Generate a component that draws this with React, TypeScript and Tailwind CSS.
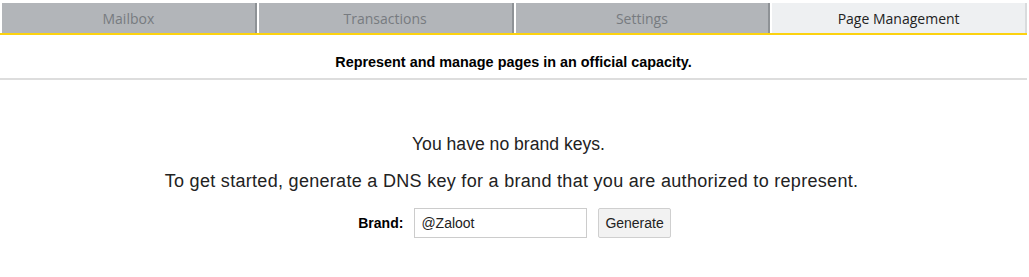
const tabs = ["Mailbox", "Transactions", "Settings", "Page Management"];

export default function App() {
  const active = 3;
  return (
    <div className="min-h-screen bg-white" style={{ fontFamily: '"Liberation Sans", Arial, sans-serif' }}>
      {/* Tab bar */}
      <div className="w-[1027px] pt-[3px] pl-[2px] border-b-2 border-[#fcd20f] flex gap-[2px]">
        {tabs.map((t, i) => (
          <div
            key={t}
            className={
              "flex-1 h-[30px] flex items-center justify-center text-[14px] border-r-2 " +
              (i === active
                ? "bg-[#eef0f2] text-[#222] border-[#d9dbdd]"
                : "bg-[#b2b5b9] text-[#777b80] border-[#8e9296]")
            }
            style={{ fontFamily: '"Open Sans", sans-serif' }}
          >
            {t}
          </div>
        ))}
      </div>

      {/* Subtitle */}
      <div className="w-[1027px] h-[45px] border-b-2 border-[#dddddd] flex items-center justify-center pt-[12px]">
        <span className="text-[14.4px] font-bold text-black">Represent and manage pages in an official capacity.</span>
      </div>

      {/* Empty state */}
      <div className="flex flex-col items-center pt-[54px] text-[#222]">
        <p className="text-[17.6px] leading-[20px] pr-[12px]">You have no brand keys.</p>
        <p className="text-[18px] leading-[20px] mt-[17px] tracking-[0.3px] pr-[6px]">
          To get started, generate a DNS key for a brand that you are authorized to represent.
        </p>
        <div className="flex items-center mt-[17px] gap-[10px]">
          <label className="text-[14px] font-bold text-black mr-[1px]">Brand:</label>
          <input
            defaultValue="@Zaloot"
            className="w-[173px] h-[30px] border border-[#cccccc] px-[6px] text-[14px] text-[#222] outline-none"
          />
          <button className="h-[30px] px-[6px] text-[14px] text-[#222] bg-[#f2f2f2] border border-[#cfcfcf] rounded-[2px] ml-[1px]">
            Generate
          </button>
        </div>
      </div>
    </div>
  );
}
